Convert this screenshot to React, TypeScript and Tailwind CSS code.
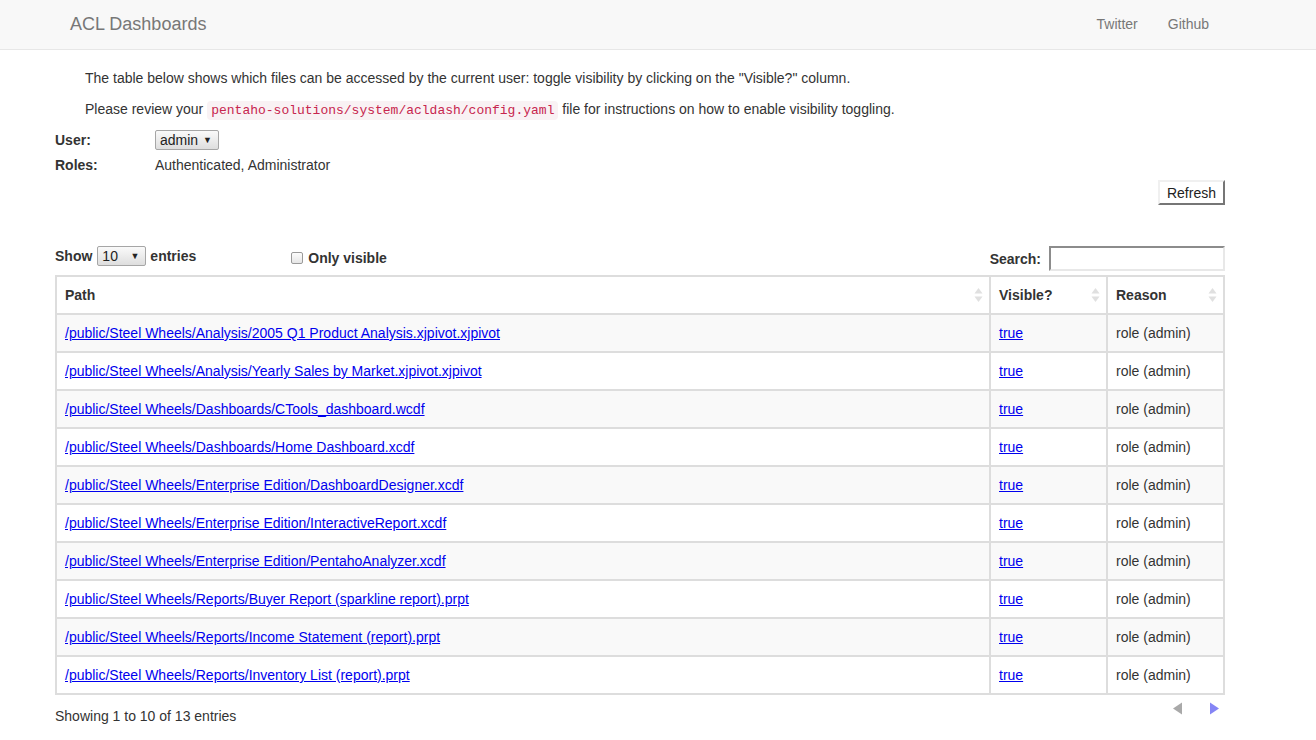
import React from "react";

const rows = [
  "/public/Steel Wheels/Analysis/2005 Q1 Product Analysis.xjpivot.xjpivot",
  "/public/Steel Wheels/Analysis/Yearly Sales by Market.xjpivot.xjpivot",
  "/public/Steel Wheels/Dashboards/CTools_dashboard.wcdf",
  "/public/Steel Wheels/Dashboards/Home Dashboard.xcdf",
  "/public/Steel Wheels/Enterprise Edition/DashboardDesigner.xcdf",
  "/public/Steel Wheels/Enterprise Edition/InteractiveReport.xcdf",
  "/public/Steel Wheels/Enterprise Edition/PentahoAnalyzer.xcdf",
  "/public/Steel Wheels/Reports/Buyer Report (sparkline report).prpt",
  "/public/Steel Wheels/Reports/Income Statement (report).prpt",
  "/public/Steel Wheels/Reports/Inventory List (report).prpt",
];

function SortIcon() {
  return (
    <svg width="9" height="16" viewBox="0 0 9 16" className="shrink-0 mr-[-2px]">
      <path d="M4.5 1 L8.5 6.5 L0.5 6.5 Z" fill="#e0e0e0" />
      <path d="M4.5 15 L8.5 9.5 L0.5 9.5 Z" fill="#e0e0e0" />
    </svg>
  );
}

function FakeSelect({ value, width }: { value: string; width: string }) {
  return (
    <div
      className={`${width} h-[20px] flex items-center justify-between px-[4px] border border-[#a6a6a6] rounded-[2px] bg-gradient-to-b from-[#fafafa] to-[#dedede] text-[14px] text-[#222]`}
    >
      <span>{value}</span>
      <span className="text-[9px] text-[#222] pr-[2px]">▼</span>
    </div>
  );
}

function Th({ label, w }: { label: string; w?: string }) {
  return (
    <th className={`${w ?? ""} border-2 border-[#ddd] h-[38px] px-[8px] text-left font-bold text-[14px] text-[#333]`}>
      <div className="flex items-center justify-between">
        <span>{label}</span>
        <SortIcon />
      </div>
    </th>
  );
}

export default function App() {
  return (
    <div
      className="min-h-[740px] bg-white text-[#333] text-[14px] leading-[20px]"
      style={{ fontFamily: '"Liberation Sans", Arial, sans-serif' }}
    >
      {/* navbar */}
      <header className="h-[50px] bg-[#f8f8f8] border-b border-[#e7e7e7] flex items-center justify-between pl-[70px] pr-[107px] pb-[2px]">
        <span className="text-[18px] text-[#777]">ACL Dashboards</span>
        <nav className="flex gap-[30px] text-[14px] text-[#777]">
          <span>Twitter</span>
          <span>Github</span>
        </nav>
      </header>

      <main className="ml-[55px] w-[1170px]">
        <p className="pl-[30px] mt-[18px] mb-[11px]">
          The table below shows which files can be accessed by the current user: toggle visibility by clicking on the "Visible?" column.
        </p>
        <p className="pl-[30px] mb-[9px]">
          Please review your{" "}
          <code
            className="bg-[#f9f2f4] text-[#c7254e] text-[13px] px-[4px] py-[2px] rounded-[4px]"
            style={{ fontFamily: '"Liberation Mono", "Courier New", monospace' }}
          >
            pentaho-solutions/system/acldash/config.yaml
          </code>{" "}
          file for instructions on how to enable visibility toggling.
        </p>

        <div className="flex items-center h-[20px]">
          <span className="w-[100px] font-bold">User:</span>
          <FakeSelect value="admin" width="w-[64px]" />
        </div>
        <div className="flex items-center h-[20px] mt-[5px]">
          <span className="w-[100px] font-bold">Roles:</span>
          <span>Authenticated, Administrator</span>
        </div>

        <div className="flex justify-end mt-[5px]">
          <button className="h-[25px] px-[7px] bg-white border-2 border-t-[#f0f0f0] border-l-[#f0f0f0] border-r-[#767676] border-b-[#767676] text-[14px] text-[#222]">
            Refresh
          </button>
        </div>

        <div className="flex items-end justify-between mt-[41px] h-[25px]">
          <div className="flex items-center h-[20px] self-start">
            <span className="font-bold">Show</span>
            <div className="ml-[5px] mr-[4px]">
              <FakeSelect value="10" width="w-[49px]" />
            </div>
            <span className="font-bold">entries</span>
            <span className="ml-[95px] mt-[4px] flex items-center">
              <span className="w-[12px] h-[12px] rounded-[2px] border border-[#9a9a9a] bg-gradient-to-b from-[#fcfcfc] to-[#e6e6e6]" />
              <span className="ml-[5px] font-bold">Only visible</span>
            </span>
          </div>
          <div className="flex items-center">
            <span className="font-bold mr-[8px] mt-[1px]">Search:</span>
            <div className="w-[176px] h-[25px] border-2 border-t-[#8c8c8c] border-l-[#8c8c8c] border-r-[#e8e8e8] border-b-[#e8e8e8] bg-white" />
          </div>
        </div>

        <table className="w-[1170px] border-collapse border-2 border-[#ddd] mt-[4px]">
          <thead>
            <tr>
              <Th label="Path" />
              <Th label="Visible?" w="w-[117px]" />
              <Th label="Reason" w="w-[117px]" />
            </tr>
          </thead>
          <tbody>
            {rows.map((r, i) => (
              <tr key={r} className={i % 2 === 0 ? "bg-[#f9f9f9]" : "bg-white"}>
                <td className="border-2 border-[#ddd] h-[38px] px-[8px]">
                  <a className="text-[#0000ee] underline">{r}</a>
                </td>
                <td className="border-2 border-[#ddd] px-[8px]">
                  <a className="text-[#0000ee] underline">true</a>
                </td>
                <td className="border-2 border-[#ddd] px-[8px]">role (admin)</td>
              </tr>
            ))}
          </tbody>
        </table>

        <div className="flex justify-between">
          <span className="mt-[11px]">Showing 1 to 10 of 13 entries</span>
          <div className="flex gap-[26px] mt-[7px] mr-[5px]">
            <svg width="11" height="13" viewBox="0 0 11 13">
              <path d="M10 0.5 L10 12.5 L1 6.5 Z" fill="#a9a9a9" />
            </svg>
            <svg width="11" height="13" viewBox="0 0 11 13">
              <path d="M1 0.5 L1 12.5 L10 6.5 Z" fill="#8585f5" />
            </svg>
          </div>
        </div>
      </main>
    </div>
  );
}
